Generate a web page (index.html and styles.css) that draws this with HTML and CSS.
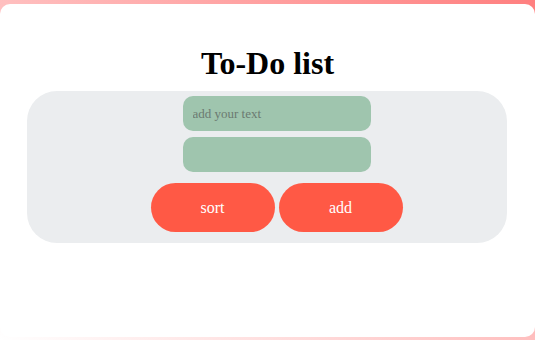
FILE: index.html
```html
<!DOCTYPE html>
<html lang="en">

<head>
    <meta charset="UTF-8">
    <meta name="viewport" content="width=device-width, initial-scale=1.0">
    <title>To-Do list</title>
    <link rel="stylesheet" href="styles.css">
</head>

<body>
    <div class="container">
        <h1>To-Do list</h1>
        <div class="todo-box">
            <input type="text" id="text" placeholder="add your text">
            <input type="text" id="list" readonly>
            <div class="buttons">
                <button id="sort">sort</button>
                <button id="add">add</button>
            </div>
        </div>
    </div>
</body>

</html>
```
FILE: styles.css
```css
* {
    box-sizing: border-box;
}

html,
body {
    height: 100%;
}

body {
    margin: 0;
    padding: 4px 0 3px;
    background: linear-gradient(to top right, #fff, #ff7f7f);
    font-family: "Liberation Serif", "Times New Roman", serif;
}

.container {
    height: 100%;
    background: #fff;
    border-radius: 10px;
    padding-top: 41px;
    display: flex;
    flex-direction: column;
    align-items: center;
}

h1 {
    margin: 0 0 9px;
    font-size: 32px;
    line-height: 37px;
}

.todo-box {
    align-self: flex-start;
    margin-left: 27px;
    width: 480px;
    background: #ebedef;
    border-radius: 30px;
    padding: 5px 0 11px 19px;
    display: flex;
    flex-direction: column;
    align-items: center;
    gap: 6px;
}

input {
    width: 188px;
    height: 35px;
    border: 0;
    outline: 0;
    border-radius: 10px;
    background: #9fc5ae;
    padding: 0 10px;
    font-family: inherit;
    font-size: 13px;
    color: #333;
}

input::placeholder {
    color: #6b7a71;
}

.buttons {
    margin-top: 5px;
    display: flex;
    gap: 4px;
}

button {
    width: 124px;
    height: 49px;
    border: 0;
    border-radius: 25px;
    background: #ff5945;
    color: #fff;
    padding-top: 2px;
    font-family: inherit;
    font-size: 16px;
    cursor: pointer;
}
```
